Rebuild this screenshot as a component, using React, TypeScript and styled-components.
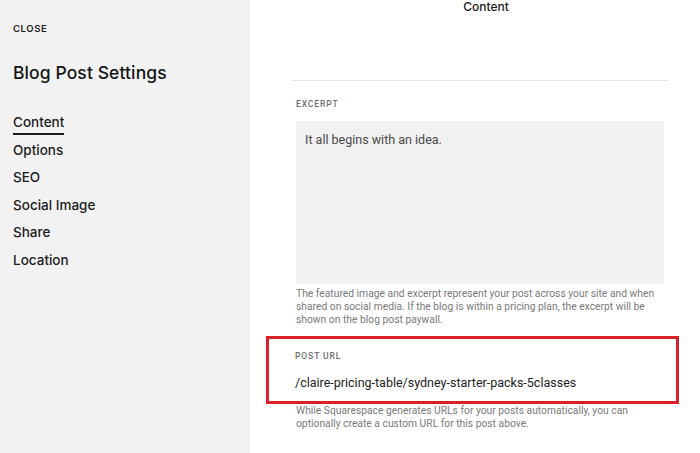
import styled, { createGlobalStyle } from "styled-components";

const GlobalStyle = createGlobalStyle`
  html, body {
    margin: 0;
    padding: 0;
    background: #ffffff;
    font-family: Inter, "Noto Sans", sans-serif;
    color: #1a1a1a;
  }
`;

const Page = styled.div`
  display: flex;
  width: 700px;
  height: 453px;
  overflow: hidden;
`;

const Sidebar = styled.aside`
  width: 250px;
  flex-shrink: 0;
  background: #f2f2f2;
  padding: 23px 13px 0;
  box-sizing: border-box;
  display: flex;
  flex-direction: column;
`;

const Close = styled.div`
  font-size: 9.5px;
  font-weight: 600;
  letter-spacing: 0.6px;
  line-height: 12px;
  color: #222;
`;

const Heading = styled.h1`
  margin: 27px 0 0;
  font-size: 17.5px;
  font-weight: 500;
  line-height: 22px;
  color: #151515;
  letter-spacing: 0.1px;
`;

const Nav = styled.nav`
  margin-top: 29px;
  display: flex;
  flex-direction: column;
  align-items: flex-start;
  gap: 9.6px;
`;

const NavItem = styled.div<{ $active?: boolean }>`
  font-size: 13.5px;
  font-weight: 450;
  line-height: 18px;
  color: #1c1c1c;
  padding-bottom: ${(p) => (p.$active ? "2px" : "0")};
  border-bottom: ${(p) => (p.$active ? "2px solid #1c1c1c" : "none")};
  margin-bottom: ${(p) => (p.$active ? "-4px" : "0")};
`;

const Main = styled.main`
  flex: 1;
  padding: 1px 32px 0 42px;
  box-sizing: border-box;
  display: flex;
  flex-direction: column;
  font-family: Roboto, "Noto Sans", sans-serif;
`;

const Title = styled.div`
  text-align: center;
  font-family: Inter, "Noto Sans", sans-serif;
  font-size: 12px;
  font-weight: 500;
  line-height: 12px;
  color: #1a1a1a;
  padding-left: 12px;
`;

const Divider = styled.hr`
  margin: 67px 0 0;
  border: none;
  border-top: 1px solid #e4e4e4;
`;

const Field = styled.section`
  padding: 0 4px;
`;

const Label = styled.div`
  font-size: 8.5px;
  font-weight: 500;
  letter-spacing: 0.9px;
  line-height: 12px;
  color: #6f6f6f;
`;

const ExcerptField = styled(Field)`
  margin-top: 17px;
`;

const TextBox = styled.div`
  margin-top: 11px;
  height: 163px;
  background: #f1f1f1;
  padding: 11px 9px;
  box-sizing: border-box;
  font-size: 12.5px;
  line-height: 16px;
  color: #4a4a4a;
`;

const Help = styled.p`
  margin: 3px 0 0;
  font-size: 10.3px;
  line-height: 13px;
  color: #7a7a7a;
`;

const UrlField = styled.section`
  margin: 10px -11px 0 -26px;
  border: 3px solid #d6202a;
  padding: 11px 0 0 26px;
  height: 68px;
  box-sizing: border-box;
`;

const UrlText = styled.div`
  margin-top: 12px;
  font-size: 12.5px;
  line-height: 18px;
  color: #222;
`;

const UrlHelp = styled(Help)`
  margin-top: 0;
  padding: 0 4px;
`;

const navItems = ["Content", "Options", "SEO", "Social Image", "Share", "Location"];

const App = () => {
  return (
    <Page>
      <GlobalStyle />
      <Sidebar>
        <Close>CLOSE</Close>
        <Heading>Blog Post Settings</Heading>
        <Nav>
          {navItems.map((item, i) => (
            <NavItem key={item} $active={i === 0}>
              {item}
            </NavItem>
          ))}
        </Nav>
      </Sidebar>
      <Main>
        <Title>Content</Title>
        <Divider />
        <ExcerptField>
          <Label>EXCERPT</Label>
          <TextBox>It all begins with an idea.</TextBox>
          <Help>
            The featured image and excerpt represent your post across your site and when
            shared on social media. If the blog is within a pricing plan, the excerpt will be
            shown on the blog post paywall.
          </Help>
        </ExcerptField>
        <UrlField>
          <Label>POST URL</Label>
          <UrlText>/claire-pricing-table/sydney-starter-packs-5classes</UrlText>
        </UrlField>
        <UrlHelp>
          While Squarespace generates URLs for your posts automatically, you can
          optionally create a custom URL for this post above.
        </UrlHelp>
      </Main>
    </Page>
  );
};

export default App;
